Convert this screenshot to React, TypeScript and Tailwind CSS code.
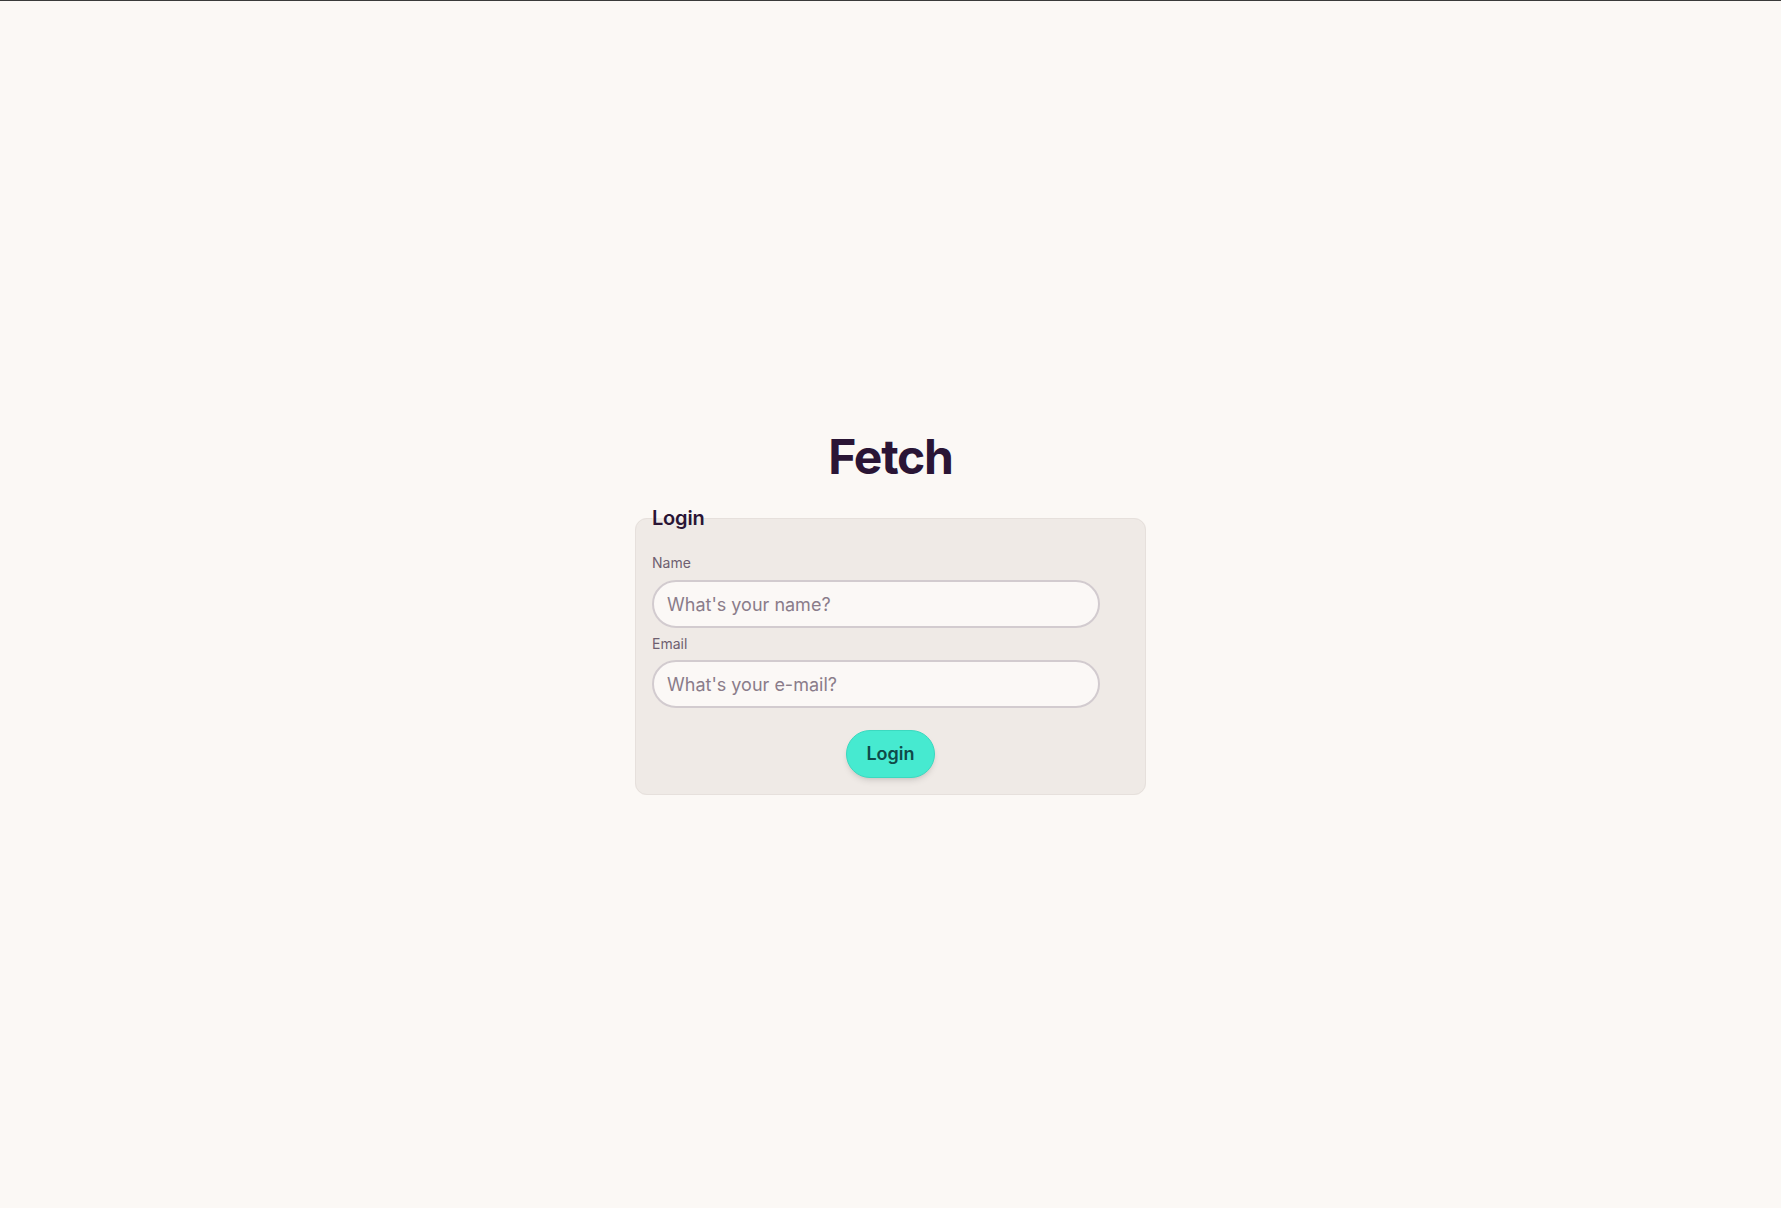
import { useState } from "react";

const LoginPage = () => {
  const [name, setName] = useState("");
  const [email, setEmail] = useState("");

  return (
    <div className="min-h-screen bg-[#fbf8f5] border-t border-[#3a3a3a] flex flex-col items-center justify-center pt-[19px] font-['Inter',sans-serif]">
      <h1 className="text-5xl leading-none font-bold text-[#2a1535] tracking-tight">
        Fetch
      </h1>
      <form
        className="mt-[23px]"
        onSubmit={(e) => {
          e.preventDefault();
        }}
      >
        <fieldset className="w-[511px] rounded-xl border border-[#e6e0dc] bg-[#efeae6] px-4 pb-4 pt-[21px]">
          <legend className="text-xl font-semibold tracking-[-0.01em] text-[#2a1535]">Login</legend>
          <label htmlFor="name" className="block text-sm text-[#6e5f70]">
            Name
          </label>
          <input
            id="name"
            type="text"
            value={name}
            onChange={(e) => setName(e.target.value)}
            placeholder="What's your name?"
            className="mt-[7px] block h-12 w-[448px] rounded-full border-2 border-[#d2cbcf] bg-[#fbf8f6] px-[13px] text-lg text-[#2a1535] placeholder:text-[#8a7c8a] outline-none"
          />
          <label htmlFor="email" className="mt-[6px] block text-sm text-[#6e5f70]">
            Email
          </label>
          <input
            id="email"
            type="email"
            value={email}
            onChange={(e) => setEmail(e.target.value)}
            placeholder="What's your e-mail?"
            className="mt-[6px] block h-12 w-[448px] rounded-full border-2 border-[#d2cbcf] bg-[#fbf8f6] px-[13px] text-lg text-[#2a1535] placeholder:text-[#8a7c8a] outline-none"
          />
          <div className="mt-[22px] flex justify-center">
            <button
              type="submit"
              className="h-12 rounded-full border border-[#3bd9c0] bg-[#46ead0] px-[19px] text-lg font-semibold text-[#0f4a48] shadow-md"
            >
              Login
            </button>
          </div>
        </fieldset>
      </form>
    </div>
  );
};

export default LoginPage;
